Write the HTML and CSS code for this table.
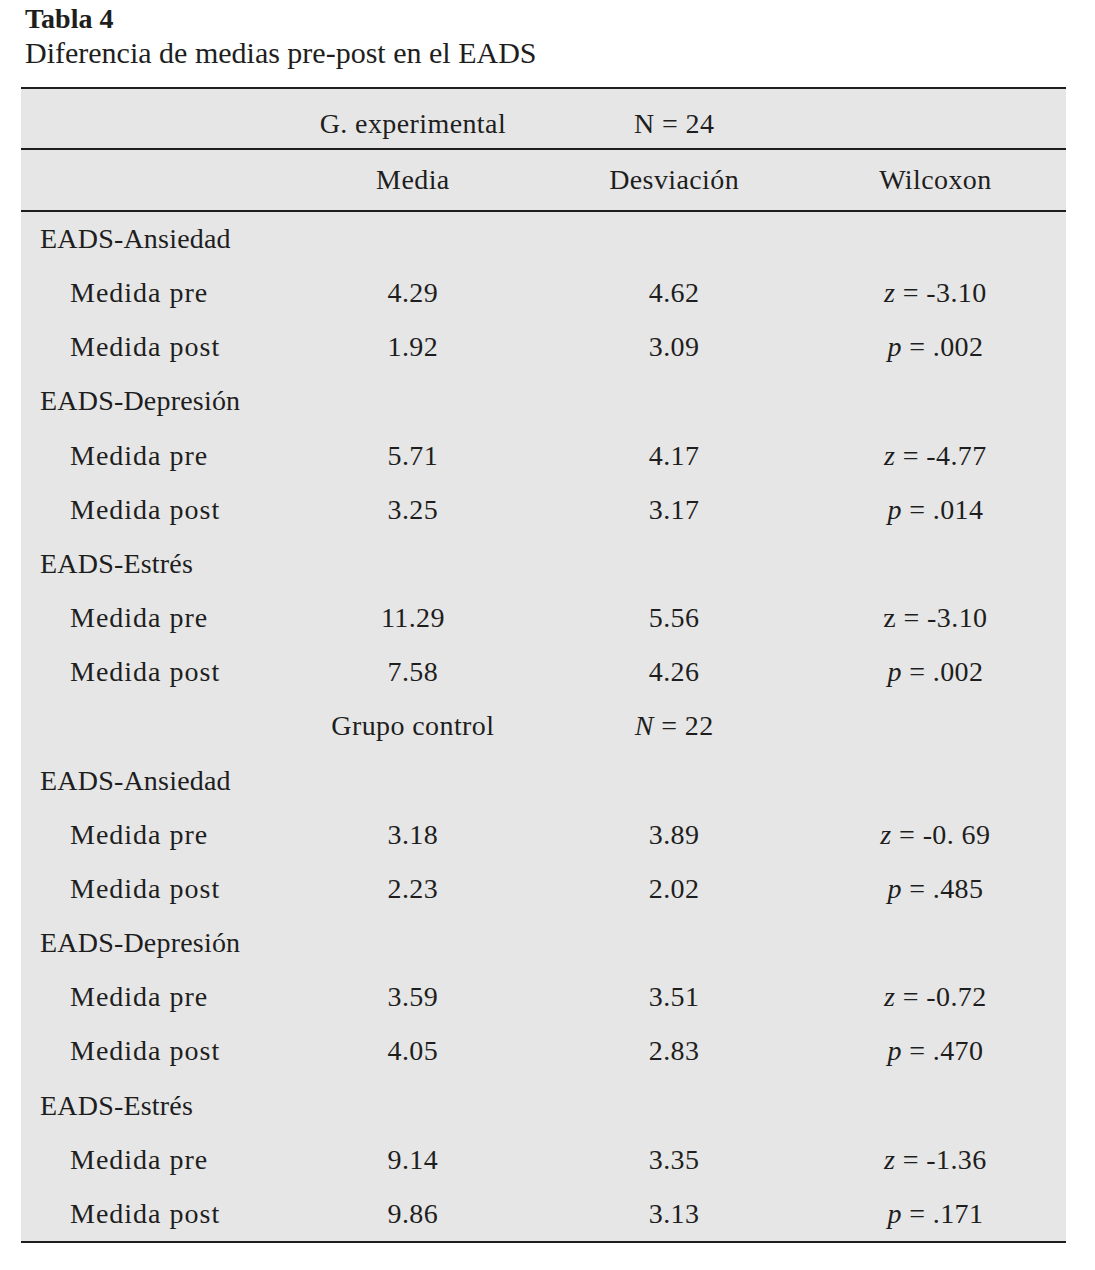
FILE: index.html
```html
<!DOCTYPE html>
<html lang="es">
<head>
<meta charset="utf-8">
<title>Tabla 4</title>
<link rel="stylesheet" href="styles.css">
</head>
<body>
<div class="caption">
  <h1 class="caption-title">Tabla 4</h1>
  <p class="caption-sub">Diferencia de medias pre-post en el EADS</p>
</div>
<table class="data">
  <thead>
    <tr class="head-1">
      <th></th>
      <th>G. experimental</th>
      <th>N = 24</th>
      <th></th>
    </tr>
    <tr class="head-2">
      <th></th>
      <th>Media</th>
      <th>Desviación</th>
      <th>Wilcoxon</th>
    </tr>
  </thead>
  <tbody>
    <tr class="group"><td class="lbl">EADS-Ansiedad</td><td></td><td></td><td></td></tr>
    <tr><td class="sub">Medida pre</td><td>4.29</td><td>4.62</td><td><i>z</i> = -3.10</td></tr>
    <tr><td class="sub">Medida post</td><td>1.92</td><td>3.09</td><td><i>p</i> = .002</td></tr>
    <tr class="group"><td class="lbl">EADS-Depresión</td><td></td><td></td><td></td></tr>
    <tr><td class="sub">Medida pre</td><td>5.71</td><td>4.17</td><td><i>z</i> = -4.77</td></tr>
    <tr><td class="sub">Medida post</td><td>3.25</td><td>3.17</td><td><i>p</i> = .014</td></tr>
    <tr class="group"><td class="lbl">EADS-Estrés</td><td></td><td></td><td></td></tr>
    <tr><td class="sub">Medida pre</td><td>11.29</td><td>5.56</td><td>z = -3.10</td></tr>
    <tr><td class="sub">Medida post</td><td>7.58</td><td>4.26</td><td><i>p</i> = .002</td></tr>
    <tr><td></td><td>Grupo control</td><td><i>N</i> = 22</td><td></td></tr>
    <tr class="group"><td class="lbl">EADS-Ansiedad</td><td></td><td></td><td></td></tr>
    <tr><td class="sub">Medida pre</td><td>3.18</td><td>3.89</td><td><i>z</i> = -0. 69</td></tr>
    <tr><td class="sub">Medida post</td><td>2.23</td><td>2.02</td><td><i>p</i> = .485</td></tr>
    <tr class="group"><td class="lbl">EADS-Depresión</td><td></td><td></td><td></td></tr>
    <tr><td class="sub">Medida pre</td><td>3.59</td><td>3.51</td><td><i>z</i> = -0.72</td></tr>
    <tr><td class="sub">Medida post</td><td>4.05</td><td>2.83</td><td><i>p</i> = .470</td></tr>
    <tr class="group"><td class="lbl">EADS-Estrés</td><td></td><td></td><td></td></tr>
    <tr><td class="sub">Medida pre</td><td>9.14</td><td>3.35</td><td><i>z</i> = -1.36</td></tr>
    <tr><td class="sub">Medida post</td><td>9.86</td><td>3.13</td><td><i>p</i> = .171</td></tr>
  </tbody>
</table>
</body>
</html>
```

FILE: styles.css
```css
html, body {
  margin: 0;
  padding: 0;
  background: #ffffff;
}

body {
  font-family: "Liberation Serif", "Times New Roman", serif;
  color: #1e1e1e;
}

.caption {
  padding-left: 25px;
  padding-top: 2px;
  margin-bottom: 17px;
}

.caption-title {
  margin: 0;
  font-size: 28px;
  line-height: 34px;
  font-weight: bold;
}

.caption-sub {
  margin: 0;
  font-size: 30px;
  line-height: 34px;
  font-weight: normal;
}

.data {
  margin-left: 21px;
  width: 1045px;
  table-layout: fixed;
  border-collapse: separate;
  border-spacing: 0;
  background: #e6e6e6;
  border-top: 2px solid #1e1e1e;
  border-bottom: 2px solid #1e1e1e;
  font-size: 28px;
  letter-spacing: 0.4px;
}

.data th,
.data td {
  padding: 0;
  text-align: center;
  font-weight: normal;
  white-space: nowrap;
}

.data i {
  font-style: italic;
}

.head-1 th {
  padding-top: 19px;
  padding-bottom: 8px;
  line-height: 32px;
  border-bottom: 2px solid #1e1e1e;
}

.head-2 th {
  padding-top: 14px;
  padding-bottom: 14px;
  line-height: 32px;
  border-bottom: 2px solid #1e1e1e;
}

.data tbody td {
  height: 54.16px;
  line-height: 54.16px;
}

.data td.lbl {
  text-align: left;
  padding-left: 19px;
  letter-spacing: 0.2px;
}

.data td.sub {
  text-align: left;
  padding-left: 49px;
  letter-spacing: 1px;
}
```
